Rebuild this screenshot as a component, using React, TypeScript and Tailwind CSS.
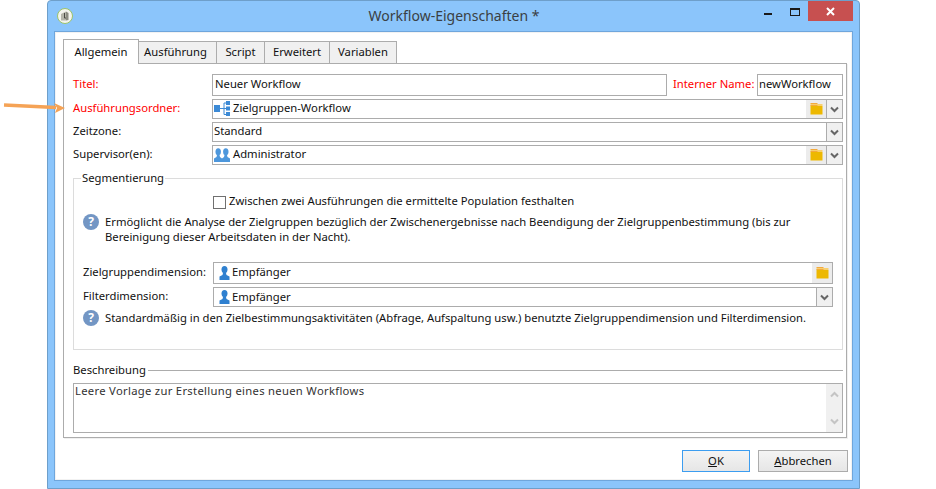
import React from 'react';

const Chevron: React.FC<{ color?: string }> = ({ color = '#666666' }) => (
  <svg width="9" height="7" viewBox="0 0 9 7">
    <path d="M1 1.5 L4.5 5 L8 1.5" fill="none" stroke={color} strokeWidth="2" />
  </svg>
);

const FolderIcon: React.FC = () => (
  <svg width="13" height="12" viewBox="0 0 13 12" className="block">
    <rect x="0.5" y="0" width="7" height="1" fill="#f3a93c" />
    <rect x="0.5" y="1" width="12" height="2" fill="#f7cf6f" />
    <rect x="0.5" y="2" width="7" height="1" fill="#f3a93c" />
    <rect x="0.5" y="3" width="12" height="8.5" fill="#edb800" />
  </svg>
);

const TreeIcon: React.FC = () => (
  <svg width="17" height="16" viewBox="0 0 17 16" className="block">
    <rect x="0" y="4" width="6" height="7" fill="#3c8ad6" />
    <path d="M6 7.5 H10 M10 2 V13.5 M10 2 H12 M10 7.5 H12 M10 13.5 H12" stroke="#3c8ad6" fill="none" />
    <rect x="12" y="0" width="4" height="4" fill="#3c8ad6" />
    <rect x="12" y="5.5" width="4" height="4" fill="#3c8ad6" />
    <rect x="12" y="11" width="4" height="4" fill="#3c8ad6" />
  </svg>
);

const PersonIcon: React.FC = () => (
  <svg width="11" height="14" viewBox="0 0 11 14" className="block">
    <ellipse cx="5.5" cy="3.6" rx="3" ry="3.6" fill="#2f80d0" />
    <path d="M4 7 H7 L7.5 9 L10.5 10.5 V14 H0.5 V10.5 L3.5 9 Z" fill="#2f80d0" />
  </svg>
);

const UsersIcon: React.FC = () => (
  <svg width="16" height="14" viewBox="0 0 16 14" className="block">
    <ellipse cx="4.2" cy="3.8" rx="2.7" ry="3.5" fill="#4d97dc" />
    <path d="M3 7 H5.5 L6 9 L8 10.5 V14 H0 V10.5 L2.5 9 Z" fill="#4d97dc" />
    <ellipse cx="11.8" cy="3.8" rx="2.7" ry="3.5" fill="#4d97dc" />
    <path d="M10.5 7 H13 L13.5 9 L16 10.5 V14 H8 V10.5 L10 9 Z" fill="#4d97dc" />
  </svg>
);

const AppIcon: React.FC = () => (
  <svg width="16" height="16" viewBox="0 0 16 16" className="block">
    <circle cx="8" cy="8" r="7.5" fill="#f4f4ee" stroke="#9cc36a" />
    <path d="M4 6 L9 3.5 V12.5 H4 Z" fill="#b5b5aa" />
    <path d="M9 3.5 L11.5 5 V12 L9 12.5 Z" fill="#8c8c82" />
    <path d="M7.5 5 V10 H9" fill="none" stroke="#4a4a44" />
  </svg>
);

const InfoIcon: React.FC = () => (
  <div className="w-4 h-4 shrink-0 rounded-full bg-[#7396c4] flex items-center justify-center text-white text-[12px] font-bold leading-none">
    ?
  </div>
);

const DropButton: React.FC = () => (
  <div className="w-[17px] self-stretch -my-px -mr-px border border-[#acacac] bg-[#f0f0f0] flex items-center justify-center">
    <Chevron />
  </div>
);

const FolderButton: React.FC = () => (
  <div className="w-[20px] self-stretch bg-[#ececec] flex items-center justify-center">
    <FolderIcon />
  </div>
);

const FieldBox: React.FC<{ className?: string; children: React.ReactNode }> = ({ className = '', children }) => (
  <div className={`flex items-center border border-[#acacac] bg-white ${className}`}>{children}</div>
);

// field text sits one pixel above the box centre
const FieldText: React.FC<{ className?: string; children: React.ReactNode }> = ({ className = '', children }) => (
  <span className={`mb-[2px] whitespace-nowrap ${className}`}>{children}</span>
);

const Label: React.FC<{ red?: boolean; width?: string; children: React.ReactNode }> = ({ red, width = 'w-[139px]', children }) => (
  <div className={`${width} shrink-0 mb-[2px] whitespace-nowrap ${red ? 'text-[#ff0000]' : 'text-[#111111]'}`}>{children}</div>
);

const App: React.FC = () => {
  const tabs = [
    { name: 'Ausführung', cls: 'w-[78px] pr-[4px]' },
    { name: 'Script', cls: 'w-[48px]' },
    { name: 'Erweitert', cls: 'w-[65px]' },
    { name: 'Variablen', cls: 'w-[67px]' },
  ];

  return (
    <div
      className="relative w-[936px] h-[489px] overflow-hidden bg-white text-[11.25px] leading-[16px] text-[#111111]"
      style={{ fontFamily: '"Noto Sans", sans-serif' }}
    >
      <div className="ml-[47px] w-[813px] h-[489px] bg-[#8bc5fb] border border-[#6e9fca] rounded-t-[4px] flex flex-col">
        {/* title bar */}
        <div className="h-[30px] shrink-0 flex items-start">
          <div className="ml-[9px] mt-[7px]">
            <AppIcon />
          </div>
          <div className="flex-1 text-center text-[14px] leading-[20px] mt-[5px] text-[#3a3f44] pl-[71px]">
            Workflow-Eigenschaften *
          </div>
          <div className="w-[8px] h-[2px] mt-[12px] mr-[18px] bg-[#1a1a1a]" />
          <div className="w-[10px] h-[8px] mt-[7px] mr-[8px] border border-[#1a1a1a] border-t-2" />
          <div className="w-[45px] h-[20px] mr-[6px] bg-[#c75050] flex items-center justify-center">
            <svg width="9" height="9" viewBox="0 0 9 9">
              <path d="M1 1 L8 8 M8 1 L1 8" stroke="#ffffff" strokeWidth="2" />
            </svg>
          </div>
        </div>

        {/* client area */}
        <div className="mx-[6px] w-[799px] h-[450px] border border-[#6fa6dc] bg-white shadow-[inset_0_0_0_1px_#f2f2f2] pt-[7px] pl-[8px] shrink-0">
          <div className="flex items-end h-[24px]">
            <div className="w-[76px] h-[25px] -mb-px relative bg-white border border-b-0 border-[#acacac] text-center pt-[4px]">
              Allgemein
            </div>
            {tabs.map(t => (
              <div
                key={t.name}
                className={`${t.cls} h-[22px] border border-b-0 border-l-0 border-[#acacac] bg-[#f0f0f0] text-center pt-[2px]`}
              >
                {t.name}
              </div>
            ))}
          </div>

          <div className="w-[784px] h-[375px] border border-[#acacac] shadow-[1px_1px_0_#f0f0f0] pt-[10px] pl-[9px] pr-[3px]">
            <div className="flex flex-col gap-[3px]">
              <div className="flex items-center h-[22px]">
                <Label red>Titel:</Label>
                <FieldBox className="w-[455px] h-[22px] pl-[2px]">
                  <FieldText>Neuer Workflow</FieldText>
                </FieldBox>
                <div className="ml-[6px] w-[84px] mb-[2px] whitespace-nowrap text-[#ff0000]">Interner Name:</div>
                <FieldBox className="flex-1 h-[22px] pl-px">
                  <FieldText>newWorkflow</FieldText>
                </FieldBox>
              </div>
              <div className="flex items-center h-[20px]">
                <Label red>Ausführungsordner:</Label>
                <FieldBox className="flex-1 h-[20px] pl-px">
                  <TreeIcon />
                  <FieldText className="ml-[2px] flex-1">Zielgruppen-Workflow</FieldText>
                  <FolderButton />
                  <DropButton />
                </FieldBox>
              </div>
              <div className="flex items-center h-[20px]">
                <Label>Zeitzone:</Label>
                <FieldBox className="flex-1 h-[20px]">
                  <FieldText className="flex-1 pl-px">Standard</FieldText>
                  <DropButton />
                </FieldBox>
              </div>
              <div className="flex items-center h-[20px]">
                <Label>Supervisor(en):</Label>
                <FieldBox className="flex-1 h-[20px] pl-px">
                  <UsersIcon />
                  <FieldText className="ml-[3px] flex-1">Administrator</FieldText>
                  <FolderButton />
                  <DropButton />
                </FieldBox>
              </div>
            </div>

            <fieldset className="mt-[5px] w-[770px] h-[180px] border border-[#dcdcdc] pl-[9px] pr-[9px]">
              <legend className="-ml-[2px] px-px">Segmentierung</legend>
              <div className="flex items-center h-[14px] mt-[9px] pl-[130px]">
                <div className="w-[13px] h-[13px] border border-[#707070] bg-white" />
                <FieldText className="ml-[3px]">Zwischen zwei Ausführungen die ermittelte Population festhalten</FieldText>
              </div>
              <div className="flex mt-[5px]">
                <InfoIcon />
                <div className="ml-[6px] leading-[15px] whitespace-nowrap">
                  Ermöglicht die Analyse der Zielgruppen bezüglich der Zwischenergebnisse nach Beendigung der Zielgruppenbestimmung (bis zur
                  <br />
                  Bereinigung dieser Arbeitsdaten in der Nacht).
                </div>
              </div>
              <div className="flex items-center h-[22px] mt-[18px]">
                <Label width="w-[130px]">Zielgruppendimension:</Label>
                <FieldBox className="flex-1 h-[22px] pl-[5px]">
                  <PersonIcon />
                  <FieldText className="ml-[2px] flex-1">Empfänger</FieldText>
                  <FolderButton />
                </FieldBox>
              </div>
              <div className="flex items-center h-[20px] mt-[3px]">
                <Label width="w-[130px]">Filterdimension:</Label>
                <FieldBox className="flex-1 h-[20px] pl-[5px]">
                  <PersonIcon />
                  <span className="ml-[2px] flex-1 whitespace-nowrap">Empfänger</span>
                  <DropButton />
                </FieldBox>
              </div>
              <div className="flex items-center mt-[3px]">
                <InfoIcon />
                <span className="ml-[6px] whitespace-nowrap">
                  Standardmäßig in den Zielbestimmungsaktivitäten (Abfrage, Aufspaltung usw.) benutzte Zielgruppendimension und Filterdimension.
                </span>
              </div>
            </fieldset>

            <div className="flex items-center h-[16px] mt-[12px]">
              <span>Beschreibung</span>
              <div className="flex-1 h-px ml-[2px] bg-[#acacac]" />
            </div>
            <div className="mt-[5px] h-[50px] border border-[#acacac] flex">
              <div className="flex-1 pl-px -mt-px tracking-[0.3px] text-[#333333]">Leere Vorlage zur Erstellung eines neuen Workflows</div>
              <div className="w-[16px] bg-[#f0f0f0] flex flex-col items-center justify-between py-[7px]">
                <div className="rotate-180">
                  <Chevron color="#c4c4c4" />
                </div>
                <Chevron color="#c4c4c4" />
              </div>
            </div>
          </div>

          <div className="flex justify-end gap-[8px] mt-[12px] pr-[4px]">
            <button className="w-[68px] h-[22px] border border-[#3c9df0] bg-gradient-to-b from-[#f4f4f4] to-[#e6e6e6]">
              <span className="underline">O</span>K
            </button>
            <button className="w-[90px] h-[22px] border border-[#acacac] bg-gradient-to-b from-[#f4f4f4] to-[#e6e6e6]">
              <span className="underline">A</span>bbrechen
            </button>
          </div>
        </div>
      </div>

      {/* orange annotation arrow */}
      <svg width="66" height="14" viewBox="0 0 66 14" className="absolute left-0 top-[101px]">
        <path d="M4 4 L56 6.5" stroke="#f5a356" strokeWidth="3.5" fill="none" />
        <path d="M54 2 L65 7 L55 12 L57 7 Z" fill="#f5a356" />
      </svg>
    </div>
  );
};

export default App;
